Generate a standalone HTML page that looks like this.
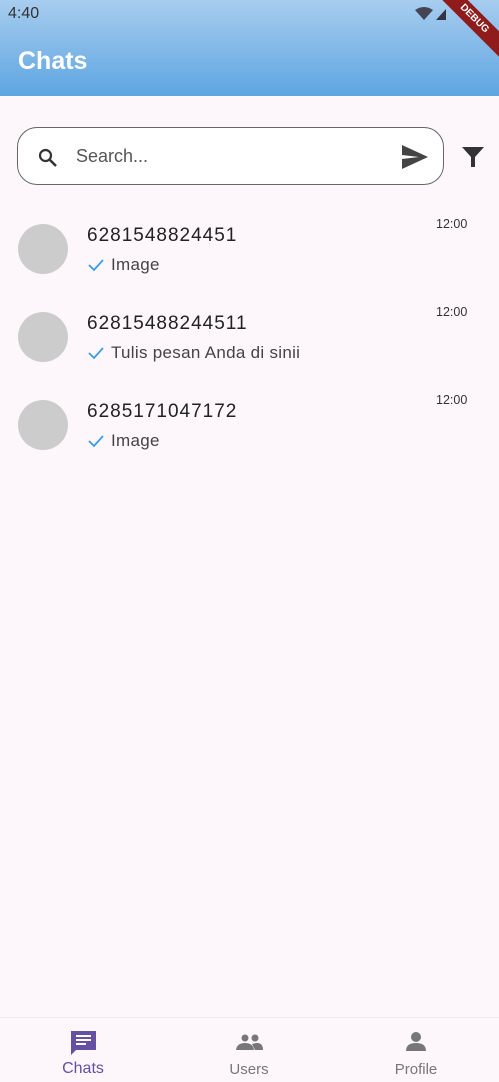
<!DOCTYPE html>
<html><head><meta charset="utf-8">
<style>
*{margin:0;padding:0;box-sizing:border-box}
body{width:499px;height:1082px;background:#fdf7fc;font-family:"Liberation Sans",sans-serif;position:relative;overflow:hidden}
.top{position:absolute;left:0;top:0;width:499px;height:96px;background:linear-gradient(#a7cdef,#5ea5e1)}
.time{position:absolute;left:8px;top:5px;font-size:16px;color:#333}
.title{position:absolute;left:18px;top:47px;font-size:25px;font-weight:bold;color:#fff}
.debug{position:absolute;right:-30px;top:10px;width:110px;height:18px;background:#8f1b1b;color:#fff;font-size:10px;font-weight:bold;text-align:center;line-height:18px;transform:rotate(45deg)}
.search{position:absolute;left:17px;top:127px;width:427px;height:58px;border:1.5px solid #666;border-radius:20px;background:#fff}
.search span{position:absolute;left:58px;top:18px;font-size:18px;color:#555}
.row{position:absolute;left:0;width:499px;height:88px}
.av{position:absolute;left:18px;top:24px;width:50px;height:50px;border-radius:50%;background:#cccccc}
.name{position:absolute;left:87px;top:25px;font-size:19px;color:#222;letter-spacing:1px}
.msg{position:absolute;left:111px;top:55px;font-size:17px;color:#444;letter-spacing:.3px}
.chk{position:absolute;left:88px;top:58px}
.tm{position:absolute;left:436px;top:17px;font-size:12.5px;color:#333}
.nav{position:absolute;left:0;top:1017px;width:499px;height:65px;border-top:1px solid #eee;background:#fdf7fc}
.it{position:absolute;top:0;width:166px;text-align:center}
.it svg{position:absolute;left:69px;top:10px}
.it div{position:absolute;width:166px;top:43px;font-size:15px;color:#777}
</style></head><body>
<div class="top">
<div class="time">4:40</div>
<svg style="position:absolute;left:414px;top:6px" width="40" height="16"><path d="M1 4 Q10-2 19 4 L10 14Z" fill="#445"/><path d="M22 14 L32 3 L32 14Z" fill="#334"/></svg>
<div class="title">Chats</div>
<div class="debug">DEBUG</div>
</div>
<div class="search">
<svg style="position:absolute;left:18px;top:18px" width="24" height="24" viewBox="0 0 24 24"><circle cx="9.5" cy="9.5" r="5.5" fill="none" stroke="#333" stroke-width="2.2"/><path d="M13.5 13.5L20 20" stroke="#333" stroke-width="2.6"/></svg>
<span>Search...</span>
<svg style="position:absolute;left:383px;top:16px" width="28" height="26" viewBox="0 0 28 26"><path d="M1 1L27 13L1 25L1 15L18 13L1 11Z" fill="#444"/></svg>
</div>
<svg style="position:absolute;left:462px;top:147px" width="22" height="20" viewBox="0 0 22 20"><path d="M0 0H22L13 10V20H9V10Z" fill="#333"/></svg>

<div class="row" style="top:200px"><div class="av"></div><div class="name">6281548824451</div><svg class="chk" width="16" height="14"><path d="M1 7L6 12L15 2" fill="none" stroke="#3b9be8" stroke-width="1.8"/></svg><div class="msg">Image</div><div class="tm">12:00</div></div>
<div class="row" style="top:288px"><div class="av"></div><div class="name">62815488244511</div><svg class="chk" width="16" height="14"><path d="M1 7L6 12L15 2" fill="none" stroke="#3b9be8" stroke-width="1.8"/></svg><div class="msg">Tulis pesan Anda di sinii</div><div class="tm">12:00</div></div>
<div class="row" style="top:376px"><div class="av"></div><div class="name">6285171047172</div><svg class="chk" width="16" height="14"><path d="M1 7L6 12L15 2" fill="none" stroke="#3b9be8" stroke-width="1.8"/></svg><div class="msg">Image</div><div class="tm">12:00</div></div>

<div class="nav">
<div class="it" style="left:0"><svg width="28" height="28" viewBox="0 0 28 28"><path d="M2 3H27V22H7L2 27Z" fill="#6650a4"/><path d="M7 8H22M7 12H22M7 16H17" stroke="#fff" stroke-width="2"/></svg><div style="color:#6650a4;top:42px;font-size:16px">Chats</div></div>
<div class="it" style="left:166px"><svg width="30" height="28" viewBox="0 0 30 28"><circle cx="10" cy="10" r="3.5" fill="#777"/><circle cx="20" cy="10" r="3.5" fill="#777"/><path d="M1 22Q2 15 10 15Q18 15 19 22ZM17 16Q20 15 22 15Q28 15 28 22H20Z" fill="#777"/></svg><div>Users</div></div>
<div class="it" style="left:333px"><svg width="28" height="28" viewBox="0 0 28 28"><circle cx="14" cy="9" r="5" fill="#777"/><path d="M4 23Q4 15 14 15Q24 15 24 23Z" fill="#777"/></svg><div>Profile</div></div>
</div>
</body></html>
